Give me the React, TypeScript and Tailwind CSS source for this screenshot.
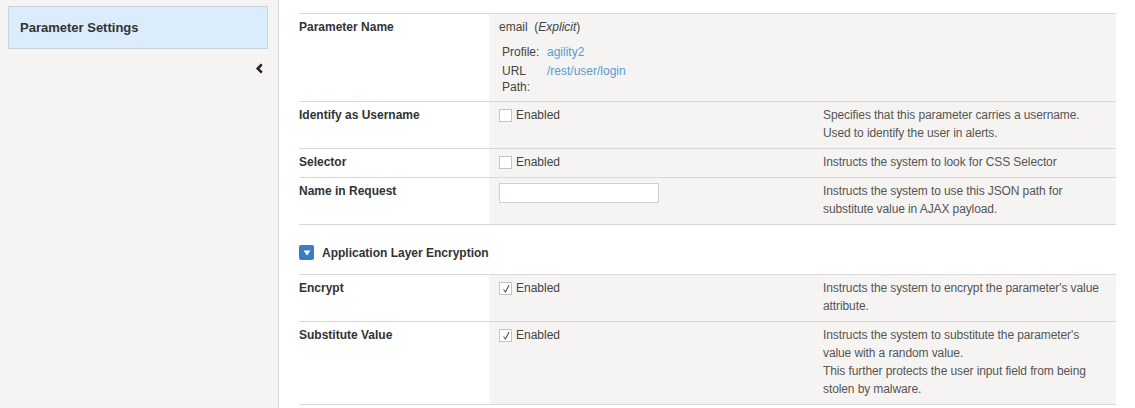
import { ReactNode } from "react";

type Row = {
  label: string;
  value: ReactNode;
  desc?: ReactNode;
};

function Checkbox({ checked }: { checked?: boolean }) {
  return (
    <span className="flex items-center gap-[4px]">
      <span className="relative inline-block w-[13px] h-[13px] border border-[#c4c4c4] bg-white">
        {checked && (
          <svg viewBox="0 0 13 13" className="absolute inset-0 w-[13px] h-[13px]">
            <path d="M3.5 6.5 L5.5 9 L9 2" fill="none" stroke="#555" strokeWidth="1.1" />
          </svg>
        )}
      </span>
      <span>Enabled</span>
    </span>
  );
}

function TableRow({ row, first }: { row: Row; first?: boolean }) {
  return (
    <div
      className={`grid grid-cols-[190px_324px_1fr] border-b border-[#d8d8d8] ${first ? "border-t" : ""}`}
    >
      <div className="pt-[4px] pb-[6px] font-bold text-[#333]">{row.label}</div>
      <div className="pt-[4px] pb-[6px] pl-[10px] bg-[#f5f4f2] text-[#444]">{row.value}</div>
      <div className="pt-[4px] pb-[6px] pl-[10px] pr-[11px] bg-[#f5f4f2] text-[#555] tracking-[-0.1px]">
        {row.desc}
      </div>
    </div>
  );
}

export default function App() {
  const topRows: Row[] = [
    {
      label: "Parameter Name",
      value: (
        <div>
          <div>
            email&nbsp; (<i>Explicit</i>)
          </div>
          <div className="mt-[8px] ml-[3px] leading-[16px] flex flex-col gap-[3px]">
            <div className="flex">
              <span className="w-[45px] shrink-0">Profile:</span>
              <span className="text-[#5b9bd1]">agility2</span>
            </div>
            <div className="flex">
              <span className="w-[30px] mr-[15px] shrink-0">URL Path:</span>
              <span className="text-[#5b9bd1]">/rest/user/login</span>
            </div>
          </div>
        </div>
      ),
    },
    {
      label: "Identify as Username",
      value: <Checkbox />,
      desc: (
        <>
          Specifies that this parameter carries a username.
          <br />
          Used to identify the user in alerts.
        </>
      ),
    },
    {
      label: "Selector",
      value: <Checkbox />,
      desc: "Instructs the system to look for CSS Selector",
    },
    {
      label: "Name in Request",
      value: (
        <input
          type="text"
          className="mt-[1px] w-[160px] h-[20px] border border-[#d0d0d0] bg-white outline-none"
        />
      ),
      desc: "Instructs the system to use this JSON path for substitute value in AJAX payload.",
    },
  ];

  const encRows: Row[] = [
    {
      label: "Encrypt",
      value: <Checkbox checked />,
      desc: "Instructs the system to encrypt the parameter's value attribute.",
    },
    {
      label: "Substitute Value",
      value: <Checkbox checked />,
      desc: (
        <>
          Instructs the system to substitute the parameter's value with a random value.
          <br />
          This further protects the user input field from being stolen by malware.
        </>
      ),
    },
  ];

  return (
    <div className="flex w-[1135px] h-[408px] overflow-hidden bg-white text-[12px] leading-[18px] font-['Liberation_Sans',Arial,sans-serif]">
      {/* Sidebar */}
      <aside className="w-[279px] shrink-0 bg-[#f5f4f2] border-r border-[#d6d6d6] pt-[6px] pl-[8px] pr-[10px]">
        <div className="h-[43px] flex items-center pl-[11px] bg-[#dbedfc] border border-[#c8d2dc] text-[13px] font-bold text-[#333]">
          Parameter Settings
        </div>
        <div className="flex justify-end mt-[14px] pr-[4px]">
          <svg viewBox="0 0 10 12" className="w-[9px] h-[11px]">
            <path d="M7.5 1.5 L3 6 L7.5 10.5" fill="none" stroke="#222" strokeWidth="2.8" />
          </svg>
        </div>
      </aside>

      {/* Main */}
      <main className="flex-1 pl-[20px] pr-[19px] pt-[13px]">
        {topRows.map((row, i) => (
          <TableRow key={row.label} row={row} first={i === 0} />
        ))}

        {/* Section header */}
        <div className="h-[49px] pt-[6px] flex items-center gap-[8px]">
          <span className="w-[15px] h-[15px] rounded-[2px] bg-[#3a7dc4] flex items-center justify-center">
            <svg viewBox="0 0 8 6" className="w-[8px] h-[6px]">
              <path d="M0.5 0.5 L7.5 0.5 L4 5.5 Z" fill="#fff" />
            </svg>
          </span>
          <span className="font-bold text-[#333]">Application Layer Encryption</span>
        </div>

        {encRows.map((row, i) => (
          <TableRow key={row.label} row={row} first={i === 0} />
        ))}
      </main>
    </div>
  );
}
